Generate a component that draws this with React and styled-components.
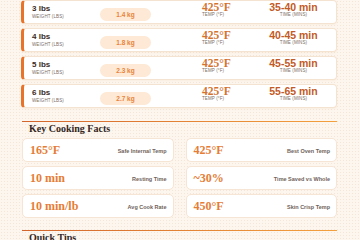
import React from "react";
import styled, { createGlobalStyle } from "styled-components";

const GlobalStyle = createGlobalStyle`
  html, body { margin: 0; padding: 0; }
  body {
    background-color: #fdf6ee;
    background-image: radial-gradient(#f5e7d8 0.7px, transparent 0.8px);
    background-size: 3px 3px;
    font-family: "Liberation Sans", Arial, sans-serif;
    color: #3a2b22;
  }
`;

const Page = styled.div`
  width: 360px;
  box-sizing: border-box;
  padding: 0 23px 0 21px;
  display: flex;
  flex-direction: column;
`;

const RowList = styled.div`
  display: flex;
  flex-direction: column;
  gap: 4px;
`;

const Row = styled.div`
  display: grid;
  grid-template-columns: 68px 102px 57px 1fr;
  align-items: center;
  height: 24px;
  box-sizing: border-box;
  background: #ffffff;
  border: 1px solid #f4e3d1;
  border-left: 3px solid #e8742c;
  border-radius: 4px;
  padding: 0 8px;
  box-shadow: 0 1px 2px rgba(214, 140, 80, 0.08);
`;

const Block = styled.div`
  display: flex;
  flex-direction: column;
  align-items: ${(p) => (p.$center ? "center" : "flex-start")};
  padding-bottom: ${(p) => p.$pb || 0}px;
`;

const Weight = styled.span`
  font-size: 8px;
  font-weight: 700;
  line-height: 11px;
  color: #3a2b22;
`;

const Tiny = styled.span`
  font-size: 4.5px;
  line-height: 5px;
  color: #7b6d64;
  text-transform: uppercase;
  letter-spacing: 0.1px;
  white-space: nowrap;
`;

const Pill = styled.span`
  display: inline-flex;
  align-items: center;
  justify-content: center;
  width: 51px;
  height: 12.5px;
  border-radius: 7px;
  background: #fde9d5;
  color: #e8833b;
  font-size: 6.5px;
  font-weight: 700;
`;

const Temp = styled.span`
  font-family: "Liberation Serif", "Times New Roman", serif;
  font-size: 11.5px;
  font-weight: 700;
  line-height: 10px;
  color: #d4732f;
`;

const Time = styled.span`
  font-size: 10.5px;
  font-weight: 700;
  line-height: 10px;
  color: #c25a26;
  white-space: nowrap;
`;

const Divider = styled.div`
  height: 1px;
  margin-top: ${(p) => p.$mt}px;
  margin-left: 1px;
  background: linear-gradient(90deg, #d2652c, #f3a03e);
`;

const SectionTitle = styled.h2`
  margin: 1px 0 0;
  padding: 0 8px;
  font-family: "Liberation Serif", "Times New Roman", serif;
  font-size: 10px;
  line-height: 12px;
  font-weight: 700;
  color: #33261e;
`;

const FactGrid = styled.div`
  display: grid;
  grid-template-columns: 1fr 1fr;
  gap: 4px 12px;
  margin: 3px 0 0 1px;
`;

const FactCard = styled.div`
  display: flex;
  align-items: center;
  justify-content: space-between;
  height: 24px;
  box-sizing: border-box;
  padding: 0 6px 0 7px;
  background: #ffffff;
  border: 1px solid #f6e5d4;
  border-radius: 5px;
`;

const FactValue = styled.span`
  font-family: "Liberation Serif", "Times New Roman", serif;
  font-size: 12px;
  font-weight: 700;
  color: #e57d36;
  white-space: nowrap;
`;

const FactLabel = styled.span`
  font-size: 5.5px;
  font-weight: 600;
  color: #6f625a;
  white-space: nowrap;
  padding-top: 2px;
`;

const rows = [
  { lbs: "3 lbs", kg: "1.4 kg", time: "35-40 min" },
  { lbs: "4 lbs", kg: "1.8 kg", time: "40-45 min" },
  { lbs: "5 lbs", kg: "2.3 kg", time: "45-55 min" },
  { lbs: "6 lbs", kg: "2.7 kg", time: "55-65 min" },
];

const facts = [
  { v: "165°F", l: "Safe Internal Temp" },
  { v: "425°F", l: "Best Oven Temp" },
  { v: "10 min", l: "Resting Time" },
  { v: "~30%", l: "Time Saved vs Whole" },
  { v: "10 min/lb", l: "Avg Cook Rate" },
  { v: "450°F", l: "Skin Crisp Temp" },
];

export default function App() {
  return (
    <>
      <GlobalStyle />
      <Page>
        <RowList>
          {rows.map((r) => (
            <Row key={r.lbs}>
              <Block $pb={2}>
                <Weight>{r.lbs}</Weight>
                <Tiny>Weight (lbs)</Tiny>
              </Block>
              <div>
                <Pill>{r.kg}</Pill>
              </div>
              <Block $pb={5}>
                <Temp>425°F</Temp>
                <Tiny>Temp (°F)</Tiny>
              </Block>
              <Block $center $pb={5}>
                <Time>{r.time}</Time>
                <Tiny>Time (mins)</Tiny>
              </Block>
            </Row>
          ))}
        </RowList>
        <Divider $mt={13} />
        <SectionTitle>Key Cooking Facts</SectionTitle>
        <FactGrid>
          {facts.map((f) => (
            <FactCard key={f.l}>
              <FactValue>{f.v}</FactValue>
              <FactLabel>{f.l}</FactLabel>
            </FactCard>
          ))}
        </FactGrid>
        <Divider $mt={12} />
        <SectionTitle>Quick Tips</SectionTitle>
      </Page>
    </>
  );
}
